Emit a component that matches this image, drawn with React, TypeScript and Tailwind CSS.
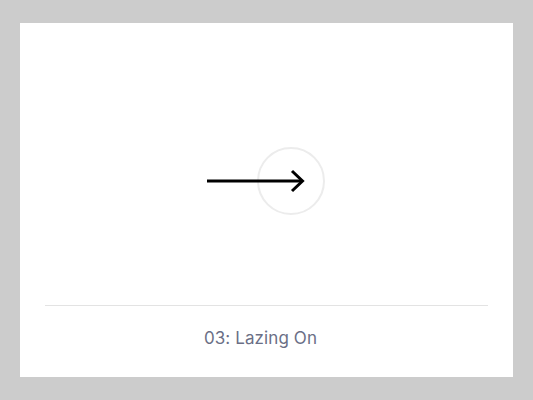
import React from "react";

export default function App() {
  return (
    <div className="w-[533px] h-[400px] bg-[#cccccc] pt-[23px] pl-[20px]">
      <div className="w-[493px] h-[354px] bg-white flex flex-col">
        <div className="h-[282px] pt-[33px] pr-[1px] flex items-center justify-center">
          <svg width="118" height="68" viewBox="0 0 118 68" fill="none">
            <circle cx="84" cy="34" r="33" stroke="#ececec" strokeWidth="2" />
            <line x1="0" y1="34" x2="95" y2="34" stroke="#000" strokeWidth="3" />
            <polyline points="85,24 95.5,34 85,44" stroke="#000" strokeWidth="3" fill="none" />
          </svg>
        </div>
        <div className="mx-[25px] border-t border-[#e3e3e3]" />
        <div className="flex-1 flex items-center justify-center pb-[5px] pr-[12px]">
          <span
            className="text-[17px] tracking-[0.1px] text-[#6b6f86]"
            style={{ fontFamily: "Inter, 'Open Sans', sans-serif" }}
          >
            03: Lazing On
          </span>
        </div>
      </div>
    </div>
  );
}
